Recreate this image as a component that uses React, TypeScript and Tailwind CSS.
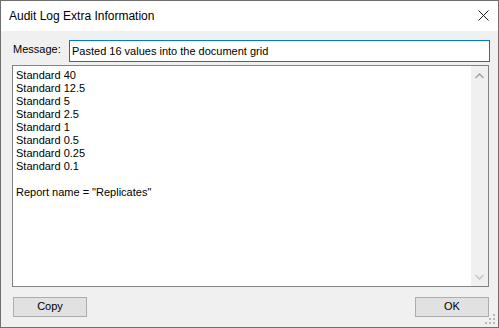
const lines = ["40", "12.5", "5", "2.5", "1", "0.5", "0.25", "0.1"];

function ResizeGrip() {
  const dots = [
    [8, 0],
    [4, 4],
    [8, 4],
    [0, 8],
    [4, 8],
    [8, 8],
  ];
  return (
    <svg width="11" height="11" viewBox="0 0 11 11" className="absolute right-[2px] bottom-[2px]">
      {dots.map(([x, y]) => (
        <rect key={`${x}-${y}`} x={x} y={y} width="2" height="2" fill="#b8b8b8" />
      ))}
    </svg>
  );
}

export default function App() {
  return (
    <div
      className="relative w-[499px] h-[328px] border border-[#6f6f6f] bg-[#f0f0f0] flex flex-col text-black"
      style={{ fontFamily: '"Liberation Sans", Arial, sans-serif' }}
    >
      <div className="h-[30px] shrink-0 bg-white flex items-center justify-between pl-[8px] pr-[9px]">
        <span className="text-[12px] leading-none">Audit Log Extra Information</span>
        <svg width="11" height="11" viewBox="0 0 11 11" className="mb-[1px]">
          <path d="M0.5 0.5 L10.5 10.5 M10.5 0.5 L0.5 10.5" stroke="#1a1a1a" strokeWidth="1" />
        </svg>
      </div>

      <div className="flex-1 flex flex-col pt-[9px] pl-[11px] pr-[8px] pb-[10px] text-[11px]">
        <div className="flex items-center h-[22px]">
          <span className="w-[57px] pl-[1px] pb-[3px]">Message:</span>
          <div className="flex-1 h-[22px] border border-[#0078d7] bg-white flex items-center pl-[2px]">
            Pasted 16 values into the document grid
          </div>
        </div>

        <div className="mt-[3px] mr-[1px] h-[222px] border border-[#828282] bg-white flex">
          <div className="flex-1 pl-[3px] pt-[3px] leading-[13px]">
            {lines.map((v) => (
              <div key={v} className="flex gap-[3px]">
                <span>Standard</span>
                <span>{v}</span>
              </div>
            ))}
            <div className="h-[13px]" />
            <div>Report name = "Replicates"</div>
          </div>
          <div className="w-[17px] bg-[#f0f0f0] flex flex-col justify-between items-center pt-[7px] pb-[6px]">
            <svg width="9" height="6" viewBox="0 0 9 6">
              <path d="M0.5 5 L4.5 1 L8.5 5" stroke="#a3a3a3" strokeWidth="1.5" fill="none" />
            </svg>
            <svg width="9" height="6" viewBox="0 0 9 6">
              <path d="M0.5 1 L4.5 5 L8.5 1" stroke="#c4c4c4" strokeWidth="1.5" fill="none" />
            </svg>
          </div>
        </div>

        <div className="mt-[10px] flex justify-between px-[1px]">
          <button className="w-[74px] h-[20px] bg-[#e1e1e1] border border-[#adadad] text-[11px] leading-none pb-[1px]">
            Copy
          </button>
          <button className="w-[74px] h-[20px] bg-[#e1e1e1] border border-[#adadad] text-[11px] leading-none pb-[1px]">
            OK
          </button>
        </div>
      </div>
      <ResizeGrip />
    </div>
  );
}
